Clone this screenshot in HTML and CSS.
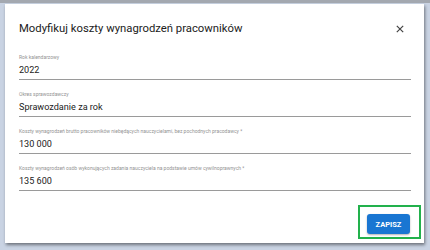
FILE: index.html
```html
<!DOCTYPE html>
<html lang="pl">
<head>
    <meta charset="UTF-8">
    <meta name="viewport" content="width=device-width, initial-scale=1.0">
    <title>Modyfikuj koszty wynagrodzeń pracowników</title>
    <link rel="stylesheet" href="styles.css">
</head>
<body>
    <div class="dialog">
        <div class="dialog-header">
            <h2>Modyfikuj koszty wynagrodzeń pracowników</h2>
            <button type="button" class="close" aria-label="Zamknij">
                <svg width="8" height="8" viewBox="0 0 8 8"><path d="M0.8 0.8L7.2 7.2M7.2 0.8L0.8 7.2" stroke="#444" stroke-width="1.2"/></svg>
            </button>
        </div>
        <div class="dialog-body">
            <div class="field">
                <label>Rok kalendarzowy</label>
                <div class="value">2022</div>
            </div>
            <div class="field">
                <label>Okres sprawozdawczy</label>
                <div class="value">Sprawozdanie za rok</div>
            </div>
            <div class="field">
                <label>Koszty wynagrodzeń brutto pracowników niebędących nauczycielami, bez pochodnych pracodawcy *</label>
                <div class="value">130 000</div>
            </div>
            <div class="field">
                <label>Koszty wynagrodzeń osób wykonujących zadania nauczyciela na podstawie umów cywilnoprawnych *</label>
                <div class="value">135 600</div>
            </div>
        </div>
        <div class="dialog-actions">
            <div class="highlight">
                <button type="button" class="save">ZAPISZ</button>
            </div>
        </div>
    </div>
</body>
</html>
```

FILE: styles.css
```css
html, body {
    margin: 0;
    height: 100%;
}
body {
    font-family: Roboto, Arial, sans-serif;
    background-color: #c9d3e3;
    border-top: 3px solid #a3a8b0;
    box-sizing: border-box;
    padding: 1px 6px 0 5px;
    overflow: hidden;
}
.dialog {
    background-color: white;
    height: 239px;
    box-sizing: border-box;
    padding: 0 13px 0 14px;
    box-shadow: 1px 2px 3px rgba(0, 0, 0, 0.45);
    display: flex;
    flex-direction: column;
}
.dialog-header {
    flex-shrink: 0;
    display: flex;
    align-items: center;
    justify-content: space-between;
    height: 48px;
    padding-top: 1px;
    box-sizing: border-box;
}
.dialog-header h2 {
    margin: 0;
    font-size: 11.3px;
    font-weight: 400;
    color: #212121;
}
.close {
    border: none;
    background: none;
    padding: 0;
    margin-right: 7px;
    display: flex;
    cursor: pointer;
}
.field {
    border-bottom: 1px solid #9a9a9a;
    padding-bottom: 2px;
    margin-bottom: 9px;
}
.field label {
    display: block;
    font-size: 5px;
    color: #939393;
    line-height: 10px;
}
.value {
    font-size: 9.1px;
    color: #222;
    line-height: 14px;
    padding-top: 1px;
}
.dialog-actions {
    margin-top: auto;
    display: flex;
    justify-content: flex-end;
    margin-right: -10px;
    margin-bottom: 4px;
}
.highlight {
    border: 2px solid #22b14c;
    padding: 5px 9px 3px 7px;
}
.save {
    background-color: #1976d2;
    color: white;
    border: none;
    border-radius: 3px;
    font-family: Roboto, Arial, sans-serif;
    font-size: 7.5px;
    font-weight: 700;
    width: 43px;
    height: 20px;
    padding: 0;
    box-shadow: 0 1px 2px rgba(0, 0, 0, 0.3);
    cursor: pointer;
}
```
